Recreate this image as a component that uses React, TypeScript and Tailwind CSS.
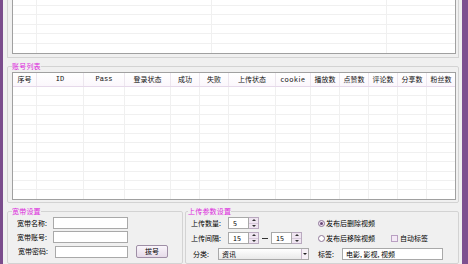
import React from 'react';

const headers = ['序号', 'ID', 'Pass', '登录状态', '成功', '失败', '上传状态', 'cookie', '播放数', '点赞数', '评论数', '分享数', '粉丝数'];
const listCols = 'grid grid-cols-[24px_47px_41px_46px_29px_29px_47px_35px_29px_29px_29px_29px_1fr]';

function GroupBox({ title, className, legendClass, children }: { title?: string; className?: string; legendClass?: string; children: React.ReactNode }) {
  return (
    <fieldset className={`border border-[#d3d3d3] rounded-[2px] min-w-0 ${className ?? ''}`}>
      {title && (
        <legend className={`px-0 text-[7px] leading-[9px] text-[#dc28dc] tracking-[0.2px] ${legendClass ?? ''}`}>{title}</legend>
      )}
      {children}
    </fieldset>
  );
}

function TextBox({ value, className }: { value?: string; className: string }) {
  return (
    <div className={`h-[12px] border border-[#a9a9a9] bg-white flex items-center pl-[3px] text-[7px] leading-none text-black ${className}`}>
      {value}
    </div>
  );
}

function Spin({ value }: { value: string }) {
  return (
    <div className="flex h-[12px]">
      <div className="w-[21px] border border-[#a9a9a9] bg-white flex items-center pl-[4px] text-[7px] leading-none">{value}</div>
      <div className="w-[10px] flex flex-col border border-l-0 border-[#b9a9bf] bg-[#efe5f1]">
        <div className="flex-1 flex items-center justify-center border-b border-[#d6c8da]">
          <div className="w-0 h-0 border-l-[2px] border-r-[2px] border-b-[2px] border-l-transparent border-r-transparent border-b-[#333]" />
        </div>
        <div className="flex-1 flex items-center justify-center">
          <div className="w-0 h-0 border-l-[2px] border-r-[2px] border-t-[2px] border-l-transparent border-r-transparent border-t-[#333]" />
        </div>
      </div>
    </div>
  );
}

export default function App() {
  return (
    <div className="w-[468px] h-[264px] overflow-hidden flex bg-[#7e5090] font-['Noto_Sans_CJK_SC',sans-serif] text-black">
      <div className="w-[3px] bg-[#7a4c8c]" />
      <div className="w-[459px] bg-[#f0f0f0] pl-[4px] pr-[3px] flex flex-col">
        {/* top list */}
        <div className="h-[58px] border-x border-b border-[#d3d3d3] pl-[4px] pr-[2px] shrink-0">
          <div className="h-[54px] border-x border-b border-[#a0a0a0] bg-white flex flex-col justify-end overflow-hidden">
            {Array.from({ length: 6 }).map((_, i) => (
              <div key={i} className="grid grid-cols-[24px_175px_175px_1fr] h-[9.4px] shrink-0 border-b border-[#f0f0f0] last:border-b-0">
                <div className="border-r border-[#f0f0f0]" />
                <div className="border-r border-[#f0f0f0]" />
                <div className="border-r border-[#f0f0f0]" />
                <div />
              </div>
            ))}
          </div>
        </div>

        {/* 账号列表 */}
        <GroupBox title="账号列表" legendClass="ml-0" className="mt-[4px] pl-[4px] pr-[2px] pt-[1px] pb-[2px]">
          <div className="h-[128px] border border-[#a0a0a0] bg-white flex flex-col overflow-hidden">
            <div className={`${listCols} h-[14px] shrink-0 border-b border-[#e6d9ea] bg-gradient-to-b from-white to-[#fbf7fc]`}>
              {headers.map((h, i) => (
                <div
                  key={h}
                  className={`flex items-center justify-center text-[7px] leading-none text-[#111] ${i < headers.length - 1 ? 'border-r border-[#ece6ee]' : ''} ${h === 'cookie' ? 'text-[5px] tracking-[0.6px]' : ''} ${h === 'ID' || h === 'Pass' ? "font-['Liberation_Mono',monospace] text-[6.5px]" : ''}`}
                >
                  {h}
                </div>
              ))}
            </div>
            {Array.from({ length: 12 }).map((_, r) => (
              <div key={r} className={`${listCols} h-[9.4px] shrink-0 border-b border-[#f0f0f0]`}>
                {headers.map((h, i) => (
                  <div key={h} className={i < headers.length - 1 ? 'border-r border-[#f0f0f0]' : ''} />
                ))}
              </div>
            ))}
          </div>
        </GroupBox>

        <div className="flex gap-[2px] mt-[4px] flex-1 min-h-0">
          {/* 宽带设置 */}
          <GroupBox title="宽带设置" legendClass="ml-[-5px]" className="w-[176px] pl-[9px] pt-[1px]">
            <div className="flex flex-col gap-[2px] text-[7px] leading-none">
              <div className="flex items-center h-[12px]">
                <span className="w-[36px]">宽带名称:</span>
                <TextBox className="w-[75px]" />
              </div>
              <div className="flex items-center h-[12px]">
                <span className="w-[36px]">宽带账号:</span>
                <TextBox className="w-[75px]" />
              </div>
              <div className="flex items-center h-[13px]">
                <span className="w-[38px] pl-[1px]">宽带密码:</span>
                <TextBox className="w-[73px]" />
                <button className="ml-[8px] w-[32px] h-[13px] border border-[#9f8fa6] rounded-[2px] bg-gradient-to-b from-[#faf6fb] to-[#e6dbe9] text-[7px] leading-none">
                  拔号
                </button>
              </div>
            </div>
          </GroupBox>

          {/* 上传参数设置 */}
          <GroupBox title="上传参数设置" legendClass="ml-[-3px]" className="flex-1 pl-[5px] pt-[1px]">
            <div className="flex flex-col text-[7px] leading-none">
              <div className="flex items-center h-[12px]">
                <div className="w-[127px] flex items-center">
                  <span className="w-[37px]">上传数量:</span>
                  <Spin value="5" />
                </div>
                <div className="flex items-center gap-[1px]">
                  <div className="w-[7px] h-[7px] rounded-full border border-[#8e7698] bg-[#efe3f2] flex items-center justify-center">
                    <div className="w-[3px] h-[3px] rounded-full bg-[#6a4a78]" />
                  </div>
                  <span>发布后删除视频</span>
                </div>
              </div>
              <div className="flex items-center h-[12px] mt-[3px]">
                <div className="w-[127px] flex items-center">
                  <span className="w-[37px]">上传间隔:</span>
                  <Spin value="15" />
                  <span className="w-[12px] flex justify-center">
                    <span className="w-[6px] h-px bg-[#333]" />
                  </span>
                  <Spin value="15" />
                </div>
                <div className="flex items-center gap-[1px]">
                  <div className="w-[7px] h-[7px] rounded-full border border-[#8e7698] bg-white" />
                  <span>发布后移除视频</span>
                </div>
                <div className="flex items-center gap-[2px] ml-[16px]">
                  <div className="w-[7px] h-[7px] border border-[#b9a0c2] bg-[#f3e9f5]" />
                  <span>自动标签</span>
                </div>
              </div>
              <div className="flex items-center h-[12px] mt-[4px]">
                <div className="w-[127px] flex items-center">
                  <span className="w-[27px] pl-[2px]">分类:</span>
                  <div className="w-[91px] h-[12px] border border-[#a9a9a9] bg-gradient-to-b from-white to-[#e9e9e9] flex items-center">
                    <span className="flex-1 pl-[3px]">资讯</span>
                    <div className="w-[7px] h-full border-l border-[#c9b9ce] bg-[#f6f0f7] flex items-center justify-center">
                      <div className="w-0 h-0 border-l-[2px] border-r-[2px] border-t-[2px] border-l-transparent border-r-transparent border-t-[#222]" />
                    </div>
                  </div>
                </div>
                <span className="w-[24px]">标签:</span>
                <TextBox value="电影, 影视, 视频" className="w-[101px]" />
              </div>
            </div>
          </GroupBox>
        </div>
      </div>
      <div className="flex-1 bg-[#7e5090]" />
    </div>
  );
}
